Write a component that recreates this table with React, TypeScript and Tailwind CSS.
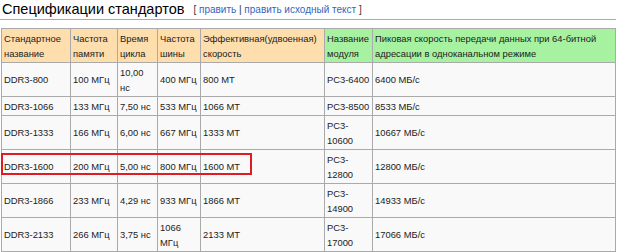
import React from 'react';

const font = { fontFamily: '"Liberation Sans", Arial, sans-serif' };

const rows: string[][] = [
  ['DDR3-800', '100 МГц', '10,00 нс', '400 МГц', '800 МТ', 'PC3-6400', '6400 МБ/с'],
  ['DDR3-1066', '133 МГц', '7,50 нс', '533 МГц', '1066 МТ', 'PC3-8500', '8533 МБ/с'],
  ['DDR3-1333', '166 МГц', '6,00 нс', '667 МГц', '1333 МТ', 'PC3-10600', '10667 МБ/с'],
  ['DDR3-1600', '200 МГц', '5,00 нс', '800 МГц', '1600 МТ', 'PC3-12800', '12800 МБ/с'],
  ['DDR3-1866', '233 МГц', '4,29 нс', '933 МГц', '1866 МТ', 'PC3-14900', '14933 МБ/с'],
  ['DDR3-2133', '266 МГц', '3,75 нс', '1066 МГц', '2133 МТ', 'PC3-17000', '17066 МБ/с'],
];

const headers = [
  'Стандартное название',
  'Частота памяти',
  'Время цикла',
  'Частота шины',
  'Эффективная(удвоенная) скорость',
  'Название модуля',
  'Пиковая скорость передачи данных при 64-битной адресации в одноканальном режиме',
];

const widths = ['w-[69px]', 'w-[47px]', 'w-[40px]', 'w-[43px]', 'w-[124px]', 'w-[48px]', 'w-[243px]'];

export default function App() {
  return (
    <div className="w-[619px] h-[252px] bg-white text-[#222] overflow-hidden" style={font}>
      <div className="h-[20px] w-[616px] border-b border-[#aaa] pl-[2px] flex items-end">
        <span className="text-[14.5px] leading-[18px] mb-[1px] text-black">Спецификации стандартов</span>
        <span className="text-[10px] leading-[14px] ml-[9px] mb-[2px] text-[#333]">
          [ <span className="text-[#3366bb]">править</span> | <span className="text-[#3366bb]">править исходный текст</span> ]
        </span>
      </div>

      <div className="relative mt-[8px] ml-[1px] w-[615px]">
        <table className="table-fixed border-collapse border border-[#aaa] bg-[#f9f9f9] w-[615px] text-[9.4px] leading-[15px]">
          <colgroup>
            {widths.map((w, i) => (
              <col key={i} className={w} />
            ))}
          </colgroup>
          <thead>
            <tr>
              {headers.map((h, i) => (
                <th
                  key={i}
                  className={`border border-[#aaa] px-[2px] py-[1.5px] text-left font-normal align-middle ${i < 5 ? 'bg-[#ffdead]' : 'bg-[#a6f2a0]'}`}
                >
                  {h}
                </th>
              ))}
            </tr>
          </thead>
          <tbody>
            {rows.map((r, ri) => (
              <tr key={ri}>
                {r.map((c, ci) => (
                  <td key={ci} className="border border-[#aaa] px-[2px] py-[1.5px] align-middle">
                    {c}
                  </td>
                ))}
              </tr>
            ))}
          </tbody>
        </table>
        <div className="absolute left-0 top-[125px] w-[251px] h-[22px] border-2 border-[#e01b24] pointer-events-none" />
      </div>
    </div>
  );
}
